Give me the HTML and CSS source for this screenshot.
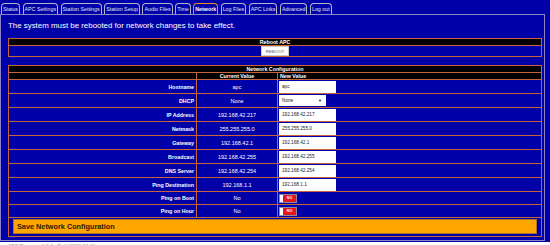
FILE: index.html
```html
<!doctype html>
<html lang="en">
<head>
    <meta charset="UTF-8">
    <title>APC - Network</title>
    <link rel="stylesheet" href="styles.css">
</head>
<body>
    <div class="app">
        <ul class="tabs">
            <li><a href="#">Status</a></li>
            <li><a href="#">APC Settings</a></li>
            <li><a href="#">Station Settings</a></li>
            <li><a href="#">Station Setup</a></li>
            <li><a href="#">Audio Files</a></li>
            <li><a href="#">Time</a></li>
            <li class="active"><a href="#">Network</a></li>
            <li><a href="#">Log Files</a></li>
            <li><a href="#">APC Links</a></li>
            <li><a href="#">Advanced</a></li>
            <li><a href="#">Log out</a></li>
        </ul>
        <div class="panel">
            <p class="notice">The system must be rebooted for network changes to take effect.</p>

            <table class="grid">
                <tr><th>Reboot APC</th></tr>
                <tr><td class="center btn-cell"><button type="button" class="btn">REBOOT</button></td></tr>
            </table>

            <form id="net-form">
                <table class="grid net">
                    <colgroup>
                        <col class="col-label">
                        <col class="col-current">
                        <col>
                    </colgroup>
                    <tr><th colspan="3">Network Configuration</th></tr>
                    <tr><th></th><th>Current Value</th><th class="left">New Value</th></tr>
                    <tr>
                        <td class="label">Hostname</td>
                        <td class="center">apc</td>
                        <td class="field"><input type="text" name="hostname" value="apc"></td>
                    </tr>
                    <tr>
                        <td class="label">DHCP</td>
                        <td class="center">None</td>
                        <td class="field">
                            <span class="select-wrap">
                                <select name="dhcp">
                                    <option>None</option>
                                    <option>Client</option>
                                </select>
                            </span>
                        </td>
                    </tr>
                    <tr>
                        <td class="label">IP Address</td>
                        <td class="center">192.168.42.217</td>
                        <td class="field"><input type="text" name="ip" value="192.168.42.217"></td>
                    </tr>
                    <tr>
                        <td class="label">Netmask</td>
                        <td class="center">255.255.255.0</td>
                        <td class="field"><input type="text" name="netmask" value="255.255.255.0"></td>
                    </tr>
                    <tr>
                        <td class="label">Gateway</td>
                        <td class="center">192.168.42.1</td>
                        <td class="field"><input type="text" name="gateway" value="192.168.42.1"></td>
                    </tr>
                    <tr>
                        <td class="label">Broadcast</td>
                        <td class="center">192.168.42.255</td>
                        <td class="field"><input type="text" name="broadcast" value="192.168.42.255"></td>
                    </tr>
                    <tr>
                        <td class="label">DNS Server</td>
                        <td class="center">192.168.42.254</td>
                        <td class="field"><input type="text" name="dns" value="192.168.42.254"></td>
                    </tr>
                    <tr>
                        <td class="label">Ping Destination</td>
                        <td class="center">192.168.1.1</td>
                        <td class="field"><input type="text" name="ping_dest" value="192.168.1.1"></td>
                    </tr>
                    <tr class="switch-row">
                        <td class="label">Ping on Boot</td>
                        <td class="center">No</td>
                        <td class="field"><span class="toggle"><span class="knob"></span><span class="state">NO</span></span></td>
                    </tr>
                    <tr class="switch-row">
                        <td class="label">Ping on Hour</td>
                        <td class="center">No</td>
                        <td class="field"><span class="toggle"><span class="knob"></span><span class="state">NO</span></span></td>
                    </tr>
                    <tr>
                        <td colspan="3" class="save-cell"><button type="submit" class="save">Save Network Configuration</button></td>
                    </tr>
                </table>
            </form>
        </div>
    </div>
    <p class="footer">APC Firmware 1.0.3 &middot; Build 2016-04-11</p>
</body>
</html>
```

FILE: styles.css
```css
body {
    margin: 0;
    background-color: #fff;
    font-family: "Liberation Sans", Arial, Helvetica, sans-serif;
}

.app {
    background-color: #0000a8;
    padding: 3px 5px 1px 0;
}

.tabs {
    display: flex;
    gap: 2.5px;
    list-style: none;
    margin: 0 0 0 1px;
    padding: 0;
}

.tabs a {
    display: block;
    height: 10px;
    line-height: 10px;
    padding: 0 1px;
    border: 1px solid #b4b4c8;
    border-bottom: none;
    border-radius: 4px 4px 0 0;
    color: #e4e4ee;
    font-size: 5.3px;
    text-decoration: none;
}

.tabs .active a {
    border-color: #e8902a;
    color: #fff;
    font-weight: bold;
}

.panel {
    border: 1px solid #8c84c8;
    padding: 4px 2px 3px 7px;
}

.notice {
    margin: 0 0 6px;
    color: #fff;
    font-size: 7.9px;
    line-height: 13px;
}

.grid {
    width: 100%;
    border-collapse: collapse;
    border: 1px solid #c8643c;
    color: #fff;
}

.grid th,
.grid td {
    border: 1px solid #c8643c;
    padding: 0;
}

.grid th {
    height: 6px;
    line-height: 6px;
    background-color: #000;
    font-size: 5.3px;
}

.grid th.left {
    text-align: left;
    padding-left: 2px;
}

.center {
    text-align: center;
}

.btn-cell {
    padding: 1px 0;
    height: 10px;
}

.btn {
    display: block;
    margin: 0 auto;
    width: 28px;
    height: 10px;
    padding: 0;
    border: 1px solid #ccc;
    background-color: #fff;
    color: #555;
    font-family: inherit;
    font-size: 4.4px;
}

.net {
    margin-top: 8px;
}

.col-label {
    width: 188px;
}

.col-current {
    width: 81px;
}

.net td {
    height: 13px;
    font-size: 5.5px;
}

.net td.label {
    text-align: right;
    padding-right: 2px;
    font-weight: bold;
    font-size: 5.3px;
}

.net td.field {
    padding-left: 1px;
}

.net input[type="text"] {
    display: block;
    box-sizing: border-box;
    width: 57px;
    height: 12px;
    margin: 0;
    padding: 0 3px;
    border: none;
    background-color: #fff;
    color: #222;
    font-family: inherit;
    font-size: 4.7px;
}

.select-wrap {
    position: relative;
    display: block;
    width: 47px;
}

.select-wrap select {
    display: block;
    width: 47px;
    height: 11px;
    padding: 0 3px;
    border: none;
    border-radius: 0;
    background-color: #fff;
    color: #222;
    font-family: inherit;
    font-size: 4.7px;
    appearance: none;
    -webkit-appearance: none;
}

.select-wrap::after {
    content: "\25BC";
    position: absolute;
    right: 4px;
    top: 3px;
    color: #111;
    font-size: 4px;
    line-height: 5px;
    pointer-events: none;
}

.switch-row td {
    height: 12px;
}

.toggle {
    display: flex;
    width: 18px;
    height: 9px;
    border: 1px solid #8888aa;
    box-sizing: border-box;
}

.toggle .knob {
    width: 3px;
    background-color: #fff;
}

.toggle .state {
    flex: 1;
    background-color: #e8141c;
    color: #fff;
    font-size: 3.6px;
    font-weight: bold;
    line-height: 7px;
    text-align: center;
}

.save-cell {
    padding: 1px 4px 2px !important;
}

.save {
    display: block;
    width: 100%;
    height: 15px;
    padding: 0 3px;
    border: 1px solid #a8702a;
    background-color: #ffa500;
    color: #2a1a00;
    font-family: inherit;
    font-size: 7.3px;
    font-weight: bold;
    text-align: left;
    cursor: pointer;
}

.footer {
    margin: 1px 0 0 8px;
    color: #8890a8;
    font-size: 5px;
    line-height: 6px;
}
```
